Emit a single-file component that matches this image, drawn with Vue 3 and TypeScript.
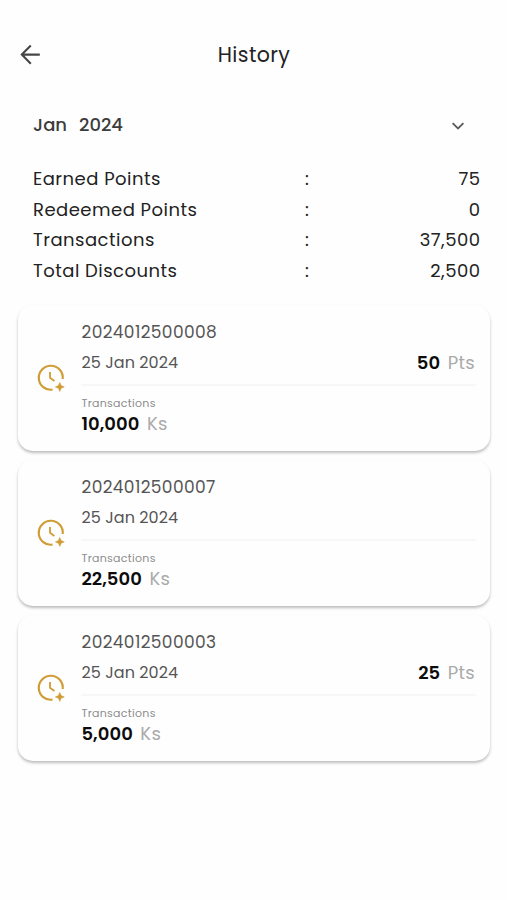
<script setup lang="ts">
interface SummaryRow {
  label: string
  value: string
}

interface Entry {
  id: string
  date: string
  points?: string
  amount: string
}

const summary: SummaryRow[] = [
  { label: 'Earned Points', value: '75' },
  { label: 'Redeemed Points', value: '0' },
  { label: 'Transactions', value: '37,500' },
  { label: 'Total Discounts', value: '2,500' },
]

const entries: Entry[] = [
  { id: '2024012500008', date: '25 Jan 2024', points: '50', amount: '10,000' },
  { id: '2024012500007', date: '25 Jan 2024', amount: '22,500' },
  { id: '2024012500003', date: '25 Jan 2024', points: '25', amount: '5,000' },
]
</script>

<template>
  <main class="screen">
    <header class="topbar">
      <button class="back" aria-label="Back">
        <svg width="22" height="22" viewBox="0 0 22 22">
          <path d="M11.8 1.5 2.8 10.6 11.8 19.7M3 10.6H20.8" fill="none" stroke="#464646" stroke-width="2.1" />
        </svg>
      </button>
      <h1 class="title">History</h1>
    </header>

    <button class="period">
      <span class="month">Jan</span>
      <span class="year">2024</span>
      <svg class="chevron" width="14" height="10" viewBox="0 0 14 10">
        <path d="m1.6 2.2 5.4 5.2 5.4-5.2" fill="none" stroke="#5a5a5a" stroke-width="1.8" />
      </svg>
    </button>

    <dl class="summary">
      <div v-for="row in summary" :key="row.label" class="row">
        <dt>{{ row.label }}</dt>
        <span class="colon">:</span>
        <dd>{{ row.value }}</dd>
      </div>
    </dl>

    <section class="list">
      <article v-for="entry in entries" :key="entry.id" class="card">
        <svg class="clock" width="28" height="28" viewBox="0 0 28 28">
          <g fill="none" stroke="#cf9c35" stroke-width="2.2">
            <path d="M25.7 15A12 12 0 1 0 15.5 25.6" />
            <path d="M13 8V13.8L17.4 16.9" stroke-width="1.8" />
          </g>
          <path d="M22.8 18.4 24.2 21.5 27.3 22.9 24.2 24.3 22.8 27.4 21.4 24.3 18.3 22.9 21.4 21.5Z" fill="#cf9c35" stroke="#cf9c35" stroke-width=".5" />
        </svg>
        <div class="body">
          <div class="id">{{ entry.id }}</div>
          <div class="dateline">
            <span class="date">{{ entry.date }}</span>
            <span v-if="entry.points" class="points">
              <b>{{ entry.points }}</b><span class="unit">Pts</span>
            </span>
          </div>
          <div class="divider"></div>
          <div class="caption">Transactions</div>
          <div class="amount">
            <b>{{ entry.amount }}</b><span class="unit">Ks</span>
          </div>
        </div>
      </article>
    </section>
  </main>
</template>

<style>
body {
  background: #fefefe;
}
</style>

<style scoped>
.screen {
  box-sizing: border-box;
  width: 507px;
  height: 900px;
  padding-top: 35px;
  overflow: hidden;
  background: #fefefe;
  font-family: Poppins, Inter, sans-serif;
  color: #222;
  white-space: nowrap;
}
button {
  border: 0;
  padding: 0;
  background: none;
  font: inherit;
  color: inherit;
}
.topbar {
  display: grid;
  grid-template-columns: 40px 1fr 40px;
  align-items: center;
  height: 40px;
  padding: 0 19px;
}
.back {
  display: flex;
}
.title {
  margin: 0;
  padding-left: 1px;
  text-align: center;
  font-size: 20.5px;
  font-weight: 400;
  line-height: 40px;
  letter-spacing: 0.4px;
}
.period {
  display: flex;
  align-items: center;
  width: 100%;
  height: 30px;
  margin-top: 35px;
  padding: 0 42px 0 33px;
  font-size: 18px;
  font-weight: 500;
  color: #3c3c3c;
}
.month,
.year {
  margin-top: -1px;
}
.month {
  width: 46px;
  text-align: left;
}
.chevron {
  margin-top: 1px;
  margin-left: auto;
}
.summary {
  margin: 24px 26.5px 0 33px;
}
.row {
  display: grid;
  grid-template-columns: 272px 1fr auto;
  height: 30.5px;
  font-size: 18px;
  line-height: 30.5px;
  letter-spacing: 0.48px;
}
dd {
  margin: 0;
}
.list {
  display: flex;
  flex-direction: column;
  gap: 9.5px;
  margin: 19px 17px 0 18px;
}
.card {
  box-sizing: border-box;
  display: flex;
  height: 145.5px;
  padding: 12px 14px 0 19px;
  border-radius: 15px;
  background: #fefefe;
  box-shadow: 0 2px 3px rgba(0, 0, 0, 0.26);
}
.clock {
  flex: none;
  margin-top: 47px;
}
.body {
  flex: 1;
  margin-left: 16px;
}
.id,
.date {
  padding-left: 0.5px;
  color: #555;
}
.id {
  font-size: 17px;
  line-height: 30px;
  letter-spacing: 0.36px;
}
.dateline {
  display: flex;
  justify-content: space-between;
  height: 30px;
  line-height: 32px;
}
.date {
  font-size: 16px;
  letter-spacing: 0.07px;
}
.points,
.amount {
  font-size: 18px;
}
.points {
  padding-right: 1px;
}
b {
  font-weight: 600;
  letter-spacing: 0.08px;
  color: #0c0c0c;
}
.unit {
  margin-left: 7.5px;
  letter-spacing: 0.3px;
  color: #aaa;
}
.divider {
  height: 2px;
  margin-top: 7px;
  background: #f7f7f7;
}
.caption {
  padding-left: 0.5px;
  margin-top: 9px;
  font-size: 11px;
  line-height: 16px;
  letter-spacing: 0.27px;
  color: #8c8c8c;
}
.amount {
  padding-left: 0.4px;
  line-height: 25px;
}
</style>
